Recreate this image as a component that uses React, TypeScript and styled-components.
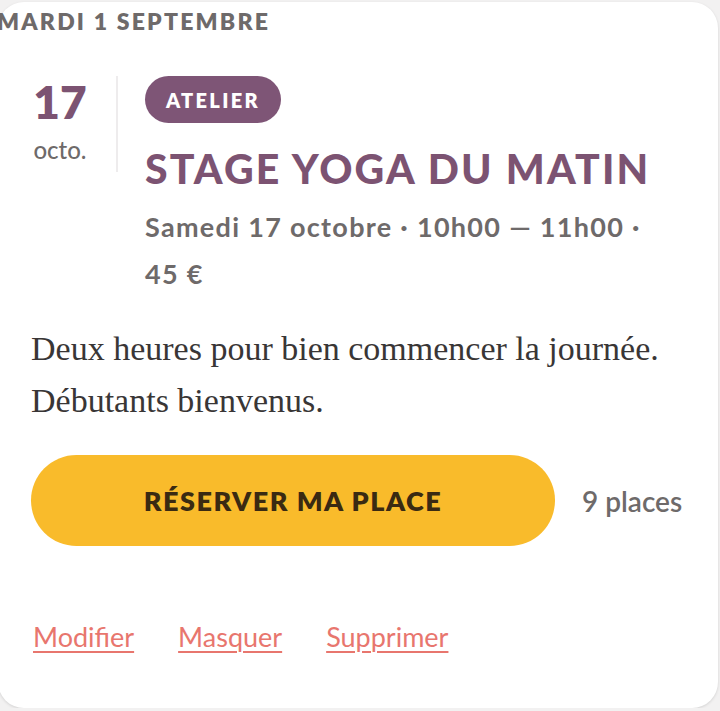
import styled, { createGlobalStyle } from 'styled-components';

const GlobalStyle = createGlobalStyle`
  html, body {
    margin: 0;
    padding: 0;
    background: #f2f1f1;
    overflow: hidden;
  }
`;

const SANS = `'Lato', 'Open Sans', 'Liberation Sans', sans-serif`;
const SERIF = `'Liberation Serif', 'DejaVu Serif', serif`;

const event = {
  dayNum: '17',
  month: 'octo.',
  kind: 'Atelier',
  title: 'Stage yoga du matin',
  meta: 'Samedi 17 octobre · 10h00 — 11h00 · 45 €',
  description: 'Deux heures pour bien commencer la journée. Débutants bienvenus.',
  seats: 9,
};

export default function App() {
  return (
    <>
      <GlobalStyle />
      <S.Card>
        <S.DayHeading>Mardi 1 septembre</S.DayHeading>

        <S.EventRow>
          <S.DateCol>
            <S.DayNum>{event.dayNum}</S.DayNum>
            <S.Month>{event.month}</S.Month>
          </S.DateCol>
          <S.Divider />
          <S.Info>
            <S.Badge>{event.kind}</S.Badge>
            <S.Title>{event.title}</S.Title>
            <S.Meta>{event.meta}</S.Meta>
          </S.Info>
        </S.EventRow>

        <S.Description>{event.description}</S.Description>

        <S.ActionRow>
          <S.BookButton type="button">Réserver ma place</S.BookButton>
          <S.Seats>{event.seats} places</S.Seats>
        </S.ActionRow>

        <S.AdminLinks>
          <S.AdminLink href="#">Modifier</S.AdminLink>
          <S.AdminLink href="#">Masquer</S.AdminLink>
          <S.AdminLink href="#">Supprimer</S.AdminLink>
        </S.AdminLinks>
      </S.Card>
    </>
  );
}

const S = {
  Card: styled.div`
    box-sizing: border-box;
    width: 720px;
    height: 706px;
    margin: 2px 0 0 -2px;
    padding: 5px 0 0 35px;
    background: #ffffff;
    border-radius: 26px;
    box-shadow: 0 1px 3px rgba(0, 0, 0, 0.13);
    display: flex;
    flex-direction: column;
  `,
  DayHeading: styled.h2`
    margin: 0 0 0 -36px;
    font-family: ${SANS};
    font-weight: 800;
    font-size: 23px;
    line-height: 28px;
    letter-spacing: 2.2px;
    text-transform: uppercase;
    color: #6e6a6a;
  `,
  EventRow: styled.div`
    display: flex;
    align-items: flex-start;
    margin-top: 41px;
  `,
  DateCol: styled.div`
    width: 54px;
    margin-right: 29px;
    display: flex;
    flex-direction: column;
    align-items: center;
    font-family: ${SANS};
  `,
  DayNum: styled.div`
    font-weight: 800;
    font-size: 46px;
    line-height: 52px;
    color: #7c5372;
  `,
  Month: styled.div`
    margin-top: 8px;
    font-size: 24px;
    line-height: 28px;
    font-weight: 500;
    color: #6e6a6a;
  `,
  Divider: styled.div`
    width: 2px;
    height: 96px;
    background: #eeeced;
  `,
  Info: styled.div`
    margin-left: 27px;
    display: flex;
    flex-direction: column;
    align-items: flex-start;
    font-family: ${SANS};
  `,
  Badge: styled.span`
    display: inline-flex;
    align-items: center;
    height: 47px;
    padding: 0 21px;
    border-radius: 24px;
    background: #7e5576;
    color: #ffffff;
    font-weight: 800;
    font-size: 20px;
    letter-spacing: 2.3px;
    text-transform: uppercase;
  `,
  Title: styled.h1`
    margin: 22px 0 0;
    font-weight: 900;
    font-size: 41px;
    line-height: 48px;
    letter-spacing: 2.2px;
    text-transform: uppercase;
    color: #7c5372;
  `,
  Meta: styled.p`
    margin: 10px 0 0;
    max-width: 510px;
    font-weight: 700;
    font-size: 27px;
    line-height: 47px;
    letter-spacing: 1.3px;
    color: #6e6a6a;
  `,
  Description: styled.p`
    margin: 26px 0 0 -2px;
    max-width: 660px;
    font-family: ${SERIF};
    font-size: 34px;
    line-height: 52px;
    color: #393636;
  `,
  ActionRow: styled.div`
    display: flex;
    align-items: center;
    gap: 27px;
    margin: 28px 0 0 -2px;
  `,
  BookButton: styled.button`
    width: 524px;
    height: 91px;
    border: none;
    border-radius: 46px;
    background: #f9bb2b;
    color: #3a2a12;
    font-family: ${SANS};
    font-weight: 800;
    font-size: 27px;
    letter-spacing: 1.5px;
    text-transform: uppercase;
    cursor: pointer;
  `,
  Seats: styled.span`
    font-family: ${SANS};
    font-weight: 600;
    font-size: 28px;
    color: #6e6a6a;
  `,
  AdminLinks: styled.nav`
    display: flex;
    gap: 44px;
    margin-top: 74px;
    font-family: ${SANS};
  `,
  AdminLink: styled.a`
    font-size: 27px;
    line-height: 34px;
    color: #e8766e;
    text-decoration: underline;
    text-decoration-thickness: 1.5px;
    text-underline-offset: 4px;
  `,
};
